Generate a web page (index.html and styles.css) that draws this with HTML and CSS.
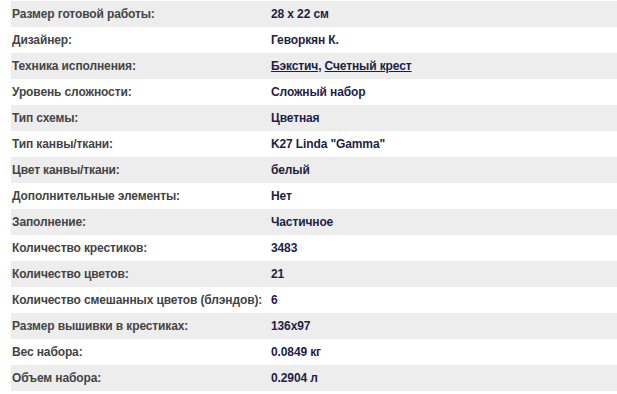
FILE: index.html
```html
<!DOCTYPE html>
<html lang="ru">
<head>
<meta charset="utf-8">
<title>Характеристики</title>
<link rel="stylesheet" href="styles.css">
</head>
<body>
<div class="specs">
  <div class="row"><div class="label">Размер готовой работы:</div><div class="value">28 x 22 см</div></div>
  <div class="row"><div class="label">Дизайнер:</div><div class="value">Геворкян К.</div></div>
  <div class="row"><div class="label">Техника исполнения:</div><div class="value"><a href="#">Бэкстич</a>, <a href="#">Счетный крест</a></div></div>
  <div class="row"><div class="label">Уровень сложности:</div><div class="value">Сложный набор</div></div>
  <div class="row"><div class="label">Тип схемы:</div><div class="value">Цветная</div></div>
  <div class="row"><div class="label">Тип канвы/ткани:</div><div class="value">K27 Linda "Gamma"</div></div>
  <div class="row"><div class="label">Цвет канвы/ткани:</div><div class="value">белый</div></div>
  <div class="row"><div class="label">Дополнительные элементы:</div><div class="value">Нет</div></div>
  <div class="row"><div class="label">Заполнение:</div><div class="value">Частичное</div></div>
  <div class="row"><div class="label">Количество крестиков:</div><div class="value">3483</div></div>
  <div class="row"><div class="label">Количество цветов:</div><div class="value">21</div></div>
  <div class="row"><div class="label">Количество смешанных цветов (блэндов):</div><div class="value">6</div></div>
  <div class="row"><div class="label">Размер вышивки в крестиках:</div><div class="value">136x97</div></div>
  <div class="row"><div class="label">Вес набора:</div><div class="value">0.0849 кг</div></div>
  <div class="row"><div class="label">Объем набора:</div><div class="value">0.2904 л</div></div>
</div>
</body>
</html>
```
FILE: styles.css
```css
html, body {
  margin: 0;
  padding: 0;
  background: #fff;
}
body {
  padding: 1px 0 0 11px;
  font-family: "Liberation Sans", Arial, sans-serif;
  font-size: 12px;
  font-weight: bold;
  letter-spacing: -0.12px;
}
.specs {
  display: flex;
  flex-direction: column;
}
.row {
  display: grid;
  grid-template-columns: 260px 1fr;
  height: 26px;
  line-height: 26px;
}
.row:nth-child(odd) {
  background: #ededed;
}
.label {
  padding-left: 1px;
  color: #444;
  white-space: nowrap;
}
.value {
  color: #1e1e46;
  white-space: nowrap;
}
.value a {
  color: #1e1e46;
  text-decoration: underline;
}
```
